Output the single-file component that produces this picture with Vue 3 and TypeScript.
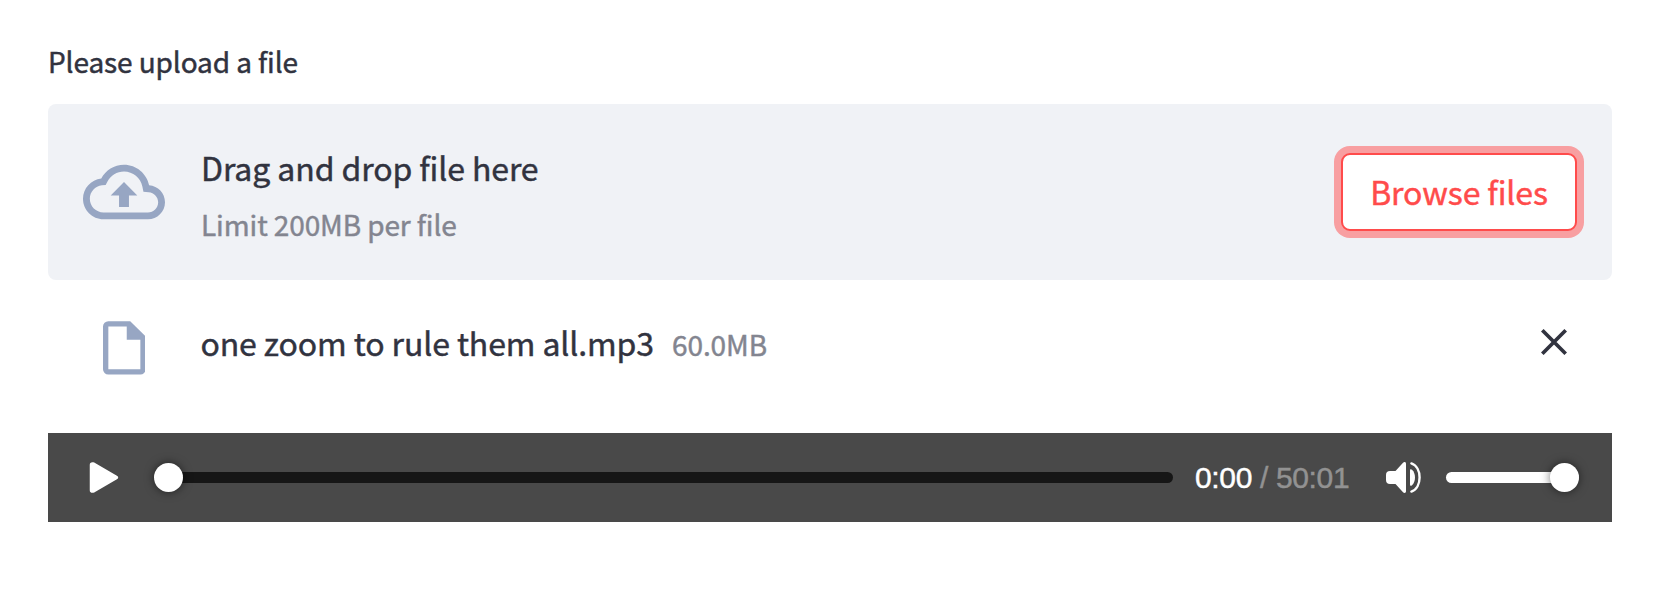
<script setup lang="ts">
import { ref } from 'vue'

interface UploadedFile {
  name: string
  size: string
}

const files = ref<UploadedFile[]>([{ name: 'one zoom to rule them all.mp3', size: '60.0MB' }])

function removeFile(index: number): void {
  files.value.splice(index, 1)
}
</script>

<template>
  <main class="page">
    <div class="label"><span>Please upload a file</span></div>

    <section class="dropzone">
      <svg class="cloud" viewBox="0 0 24 24" fill="currentColor">
        <path d="M19.35 10.04C18.67 6.59 15.64 4 12 4 9.11 4 6.6 5.64 5.35 8.04 2.34 8.36 0 10.91 0 14c0 3.31 2.69 6 6 6h13c2.76 0 5-2.24 5-5 0-2.64-2.05-4.78-4.65-4.96zM19 18H6c-2.21 0-4-1.79-4-4 0-2.05 1.53-3.76 3.56-3.97l1.07-.11.5-.95C8.08 7.14 9.94 6 12 6c2.62 0 4.88 1.86 5.39 4.43l.3 1.5 1.53.11c1.56.1 2.78 1.41 2.78 2.96 0 1.65-1.35 3-3 3z" />
        <path d="M8.1 13h2.45v3.4h2.9V13h2.45L12 9.1z" />
      </svg>
      <div class="instructions">
        <span class="title">Drag and drop file here</span>
        <span class="limit">Limit 200MB per file</span>
      </div>
      <button class="browse" type="button"><span>Browse files</span></button>
    </section>

    <div v-for="(file, index) in files" :key="file.name" class="file">
      <svg class="doc" viewBox="0 0 8 10" fill="currentColor">
        <path fill-rule="evenodd" d="M1 0H5.1L8 2.85V9a1 1 0 0 1-1 1H1a1 1 0 0 1-1-1V1a1 1 0 0 1 1-1zM1 1V9H7V3.5H4.45V1z" />
      </svg>
      <span class="name">{{ file.name }}</span>
      <span class="size">{{ file.size }}</span>
      <button class="remove" type="button" aria-label="Remove file" @click="removeFile(index)">
        <svg viewBox="0 0 26 26" fill="none" stroke="currentColor" stroke-width="3.7">
          <path d="M1.3 1.3 24.7 24.7M24.7 1.3 1.3 24.7" />
        </svg>
      </button>
    </div>

    <section class="player">
      <svg class="play" viewBox="0 0 29 31" fill="#fff">
        <path d="M0 3C0 .6 2.5-.6 4.7.6L27 13.4c2.4 1.4 2.4 2.9 0 4.2L4.7 30.4C2.5 31.6 0 30.4 0 28z" />
      </svg>
      <div class="track seek"><i class="knob"></i></div>
      <div class="time"><span class="now">0:00</span><span class="total"> / 50:01</span></div>
      <svg class="speaker" viewBox="0 0 35 31" fill="#fff">
        <path d="M4 9H9.5L16.8 1C18.3-.5 20 0 20 1.8V29.2C20 31 18.3 31.5 16.8 30L9.5 22H4C1.4 22 0 20.6 0 18V13C0 10.4 1.4 9 4 9z" />
        <path d="M24 8.4C24 7 25 6.8 26 7.7 30 11.4 30 19.6 26 23.3 25 24.2 24 24 24 22.6z" />
        <path d="M25.4 1.4C36.3 5.4 36.3 25.6 25.4 29.6" fill="none" stroke="#fff" stroke-width="2.4" stroke-linecap="round" />
      </svg>
      <div class="track volume"><i class="knob"></i></div>
    </section>
  </main>
</template>

<style>
body {
  margin: 0;
  background: #fff;
}
</style>

<style scoped>
.page {
  box-sizing: border-box;
  height: 604px;
  padding: 40px 68px 0 48px;
  color: #31333f;
  font-family: "Noto Sans CJK SC", "Noto Sans", sans-serif;
  letter-spacing: -0.1px;
  white-space: pre;
  -webkit-text-stroke: 0.45px currentColor;
}
.label {
  height: 64px;
  font-size: 28px;
  line-height: 42px;
}
.dropzone {
  box-sizing: border-box;
  display: flex;
  align-items: center;
  height: 176px;
  padding: 0 35px;
  border-radius: 8px;
  background: #f0f2f6;
}
.cloud {
  width: 82px;
  height: 82px;
  flex: none;
  color: #97a6c3;
}
.instructions {
  display: flex;
  flex-direction: column;
  margin: 4px auto 0 36px;
}
.title {
  font-size: 32px;
  line-height: 60px;
}
.limit {
  font-size: 28px;
  line-height: 54px;
  color: #838590;
}
.browse {
  box-sizing: border-box;
  width: 236px;
  height: 78px;
  padding: 0 0 2px;
  border: 2px solid #ff4b4b;
  border-radius: 9px;
  background: #fff;
  box-shadow: 0 0 0 7px rgba(255, 75, 75, 0.5);
  color: #ff4b4b;
  font: 32px/72px "Noto Sans CJK SC", "Noto Sans", sans-serif;
  letter-spacing: -0.1px;
}
.file {
  display: flex;
  height: 153px;
  padding: 0 45px 0 54.7px;
}
.doc {
  width: 42.7px;
  height: 53.7px;
  margin-top: 41px;
  flex: none;
  color: #97a6c3;
}
.name {
  margin-left: 55px;
  font-size: 32px;
  line-height: 124px;
}
.size {
  margin-left: 18px;
  font-size: 28px;
  line-height: 129px;
  color: #838590;
}
.remove {
  width: 26px;
  height: 26px;
  margin: 49px 0 0 auto;
  padding: 0;
  border: 0;
  background: none;
  color: #31333f;
}
.remove svg {
  display: block;
}
.player {
  box-sizing: border-box;
  display: flex;
  align-items: center;
  height: 89px;
  padding: 0 33px 0 41px;
  background: #494949;
  font: 30px/40px "Liberation Sans", Arial, sans-serif;
  letter-spacing: -0.35px;
}
.play {
  width: 29px;
  height: 31px;
  margin-right: -1px;
  flex: none;
  transform: translateX(0.5px);
}
.track {
  display: flex;
  align-items: center;
  height: 11px;
  border-radius: 6px;
}
.knob {
  width: 29px;
  height: 29px;
  flex: none;
  border-radius: 50%;
  background: #fff;
  box-shadow: 0 0 10px rgba(0, 0, 0, 0.55);
}
.seek {
  flex: 1;
  margin-left: 37px;
  background: #161616;
}
.time {
  width: 151px;
  margin-left: 22px;
}
.now {
  color: #fff;
}
.total {
  color: #929292;
}
.speaker {
  width: 35px;
  height: 31px;
  margin-left: 40px;
  flex: none;
}
.volume {
  width: 133px;
  margin-left: 25px;
  justify-content: flex-end;
  background: #fff;
}
</style>
